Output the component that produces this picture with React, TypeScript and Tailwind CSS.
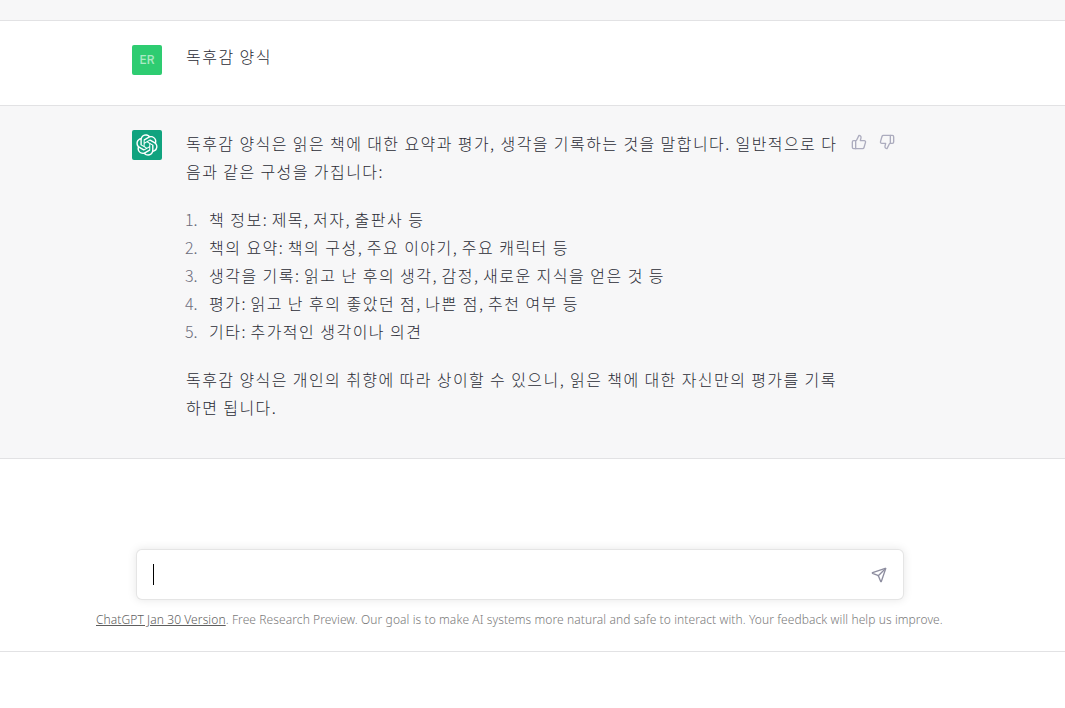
import { ThumbsUp, ThumbsDown, Send } from "lucide-react";

const KR = "font-['Noto_Sans_CJK_KR','Noto_Sans',sans-serif]";

const items = [
  "책 정보: 제목, 저자, 출판사 등",
  "책의 요약: 책의 구성, 주요 이야기, 주요 캐릭터 등",
  "생각을 기록: 읽고 난 후의 생각, 감정, 새로운 지식을 얻은 것 등",
  "평가: 읽고 난 후의 좋았던 점, 나쁜 점, 추천 여부 등",
  "기타: 추가적인 생각이나 의견",
];

function T({ children }: { children: string }) {
  return (
    <>
      {children.split(/([,:.])/).map((part, i) =>
        i % 2 === 1 ? (
          <span key={i} className="tracking-normal">
            {part}
          </span>
        ) : (
          part
        ),
      )}
    </>
  );
}

function Logo() {
  return (
    <svg viewBox="0 0 41 41" fill="none" className="w-[22px] h-[22px]">
      <path
        fill="currentColor"
        d="M37.5324 16.8707C37.9808 15.5241 38.1363 14.0974 37.9886 12.6859C37.8409 11.2744 37.3934 9.91076 36.676 8.68622C35.6126 6.83404 33.9882 5.3676 32.0373 4.4985C30.0864 3.62941 27.9098 3.40259 25.8215 3.85078C24.8796 2.7893 23.7219 1.94125 22.4257 1.36341C21.1295 0.785575 19.7249 0.491269 18.3058 0.500197C16.1708 0.495044 14.0893 1.16803 12.3614 2.42214C10.6335 3.67624 9.34853 5.44666 8.6917 7.47815C7.30085 7.76286 5.98686 8.3414 4.8377 9.17505C3.68854 10.0087 2.73073 11.0782 2.02839 12.312C0.956464 14.1591 0.498905 16.2988 0.721698 18.4228C0.944492 20.5467 1.83612 22.5449 3.268 24.1293C2.81966 25.4759 2.66413 26.9026 2.81182 28.3141C2.95951 29.7256 3.40701 31.0892 4.12437 32.3138C5.18791 34.1659 6.8123 35.6322 8.76321 36.5013C10.7141 37.3704 12.8907 37.5973 14.9789 37.1492C15.9208 38.2107 17.0786 39.0587 18.3747 39.6366C19.6709 40.2144 21.0755 40.5087 22.4946 40.4998C24.6307 40.5054 26.7133 39.8321 28.4418 38.5772C30.1704 37.3223 31.4556 35.5506 32.1119 33.5179C33.5027 33.2332 34.8167 32.6547 35.9659 31.821C37.115 30.9874 38.0728 29.9178 38.7752 28.684C39.8458 26.8371 40.3023 24.6979 40.0789 22.5748C39.8556 20.4517 38.9639 18.4544 37.5324 16.8707ZM22.4978 37.8849C20.7443 37.8874 19.0459 37.2733 17.6994 36.1501C17.7601 36.117 17.8666 36.0586 17.936 36.0161L25.9004 31.4156C26.1003 31.3019 26.2663 31.137 26.3813 30.9378C26.4964 30.7386 26.5563 30.5124 26.5549 30.2825V19.0542L29.9213 20.998C29.9389 21.0068 29.9541 21.0198 29.9656 21.0359C29.977 21.052 29.9842 21.0707 29.9867 21.0902V30.3889C29.9842 32.375 29.1946 34.2791 27.7909 35.6841C26.3872 37.0892 24.4838 37.8806 22.4978 37.8849ZM6.39227 31.0064C5.51397 29.4888 5.19742 27.7107 5.49804 25.9832C5.55718 26.0187 5.66048 26.0818 5.73461 26.1244L13.699 30.7248C13.8975 30.8408 14.1233 30.902 14.3532 30.902C14.583 30.902 14.8088 30.8408 15.0073 30.7248L24.731 25.1103V28.9979C24.7321 29.0177 24.7283 29.0376 24.7199 29.0556C24.7115 29.0736 24.6988 29.0893 24.6829 29.1012L16.6317 33.7497C14.9096 34.7416 12.8643 35.0097 10.9447 34.4954C9.02506 33.9811 7.38785 32.7263 6.39227 31.0064ZM4.29707 13.6194C5.17156 12.0998 6.55279 10.9364 8.19885 10.3327C8.19885 10.4013 8.19491 10.5228 8.19491 10.6071V19.808C8.19351 20.0378 8.25334 20.2638 8.36823 20.4629C8.48312 20.6619 8.64893 20.8267 8.84863 20.9404L18.5723 26.5542L15.206 28.4979C15.1894 28.5089 15.1703 28.5155 15.1505 28.5173C15.1307 28.5191 15.1107 28.516 15.0924 28.5082L7.04046 23.8557C5.32135 22.8601 4.06716 21.2235 3.55289 19.3046C3.03862 17.3858 3.30624 15.3413 4.29707 13.6194ZM31.955 20.0556L22.2312 14.4411L25.5976 12.4981C25.6142 12.4872 25.6333 12.4805 25.6531 12.4787C25.6729 12.4769 25.6928 12.4801 25.7111 12.4879L33.7631 17.1364C34.9967 17.849 36.0017 18.8982 36.6606 20.1613C37.3194 21.4244 37.6047 22.849 37.4832 24.2684C37.3617 25.6878 36.8382 27.0432 35.9743 28.1759C35.1103 29.3086 33.9415 30.1717 32.6047 30.6641C32.6047 30.5947 32.6047 30.4733 32.6047 30.3889V21.188C32.6066 20.9586 32.5474 20.7328 32.4332 20.5338C32.319 20.3348 32.154 20.1698 31.955 20.0556ZM35.3055 15.0128C35.2464 14.9765 35.1431 14.9142 35.069 14.8717L27.1045 10.2712C26.906 10.1554 26.6803 10.0943 26.4504 10.0943C26.2206 10.0943 25.9948 10.1554 25.7963 10.2712L16.0726 15.8858V11.9982C16.0715 11.9783 16.0753 11.9585 16.0837 11.9405C16.0921 11.9225 16.1048 11.9068 16.1207 11.8949L24.1719 7.25025C25.4053 6.53903 26.8158 6.19376 28.2383 6.25482C29.6608 6.31589 31.0364 6.78077 32.2044 7.59508C33.3723 8.40939 34.2842 9.53945 34.8334 10.8531C35.3826 12.1667 35.5464 13.6095 35.3055 15.0128ZM14.2424 21.9419L10.8752 19.9981C10.8576 19.9893 10.8423 19.9763 10.8309 19.9602C10.8195 19.9441 10.8122 19.9254 10.8098 19.9058V10.6071C10.8107 9.18295 11.2173 7.78848 11.9819 6.58696C12.7466 5.38544 13.8377 4.42659 15.1275 3.82264C16.4173 3.21869 17.8524 2.99464 19.2649 3.1767C20.6775 3.35876 22.0089 3.93941 23.1034 4.85067C23.0427 4.88379 22.937 4.94215 22.8668 4.98473L14.9024 9.58517C14.7025 9.69878 14.5366 9.86356 14.4215 10.0626C14.3065 10.2616 14.2466 10.4877 14.2479 10.7175L14.2424 21.9419ZM16.071 17.9991L20.4018 15.4978L24.7325 17.9975V22.9985L20.4018 25.4983L16.071 22.9985V17.9991Z"
      />
    </svg>
  );
}

export default function App() {
  return (
    <div className={`min-h-[708px] bg-white text-[16px] leading-[28px] font-light text-[#2a2b35] ${KR}`}>
      <div className="h-[21px] bg-[#f7f7f8] border-b border-[#e2e2e4]" />

      <div className="h-[85px] border-b border-[#e2e2e4] pt-[24px] pl-[132px] flex">
        <div className="w-[30px] h-[30px] rounded-[2px] bg-[#2ecc71] flex items-center justify-center text-white/60 text-[12px] leading-none font-medium font-['Inter',sans-serif]">
          ER
        </div>
        <div className="ml-[24px] -mt-[3px] tracking-[1.48px]">독후감 양식</div>
      </div>

      <div className="h-[353px] bg-[#f7f7f8] border-b border-[#e2e2e4] pt-[24px] pl-[132px] flex">
        <div className="w-[30px] h-[30px] rounded-[2px] bg-[#10a37f] flex items-center justify-center text-white shrink-0">
          <Logo />
        </div>
        <div className="ml-[24px] w-[653px] -mt-[1px] tracking-[1.42px]">
          <p>독후감 양식은 읽은 책에 대한 요약과 평가, 생각을 기록하는 것을 말합니다. 일반적으로 다음과 같은 구성을 가집니다:</p>
          <ol className="mt-[20px] mb-[20px] tracking-[1.48px]">
            {items.map((t, i) => (
              <li key={t} className="flex">
                <span className="w-[23px] -ml-[1px] mr-[1px] text-[#6b6c7b] tracking-normal">{i + 1}.</span>
                <span>
                  <T>{t}</T>
                </span>
              </li>
            ))}
          </ol>
          <p>독후감 양식은 개인의 취향에 따라 상이할 수 있으니, 읽은 책에 대한 자신만의 평가를 기록하면 됩니다.</p>
        </div>
        <div className="ml-[12px] flex gap-[12px] pt-[4px] text-[#acacbe] h-fit">
          <ThumbsUp size={16} strokeWidth={2} />
          <ThumbsDown size={16} strokeWidth={2} />
        </div>
      </div>

      <div className="ml-[136px] mt-[90px] w-[768px] h-[51px] bg-white rounded-[6px] border border-black/10 shadow-[0_0_10px_rgba(0,0,0,0.1)] flex items-center justify-between pl-[16px] pr-[16px]">
        <div className="w-px h-[21px] bg-black" />
        <Send size={16} strokeWidth={2} className="text-[#8e8ea0]" />
      </div>

      <div className="h-[52px] border-b border-[#e2e2e4] pl-[96px] pt-[12px] text-[12px] leading-[16px] font-light tracking-[0.09px] text-[#7a7a7a] font-['Noto_Sans',sans-serif]">
        <span className="underline text-[#5e5e5e]">ChatGPT Jan 30 Version</span>. Free Research Preview. Our goal is to make AI systems more natural and safe to interact with. Your feedback will help us improve.
      </div>
    </div>
  );
}
